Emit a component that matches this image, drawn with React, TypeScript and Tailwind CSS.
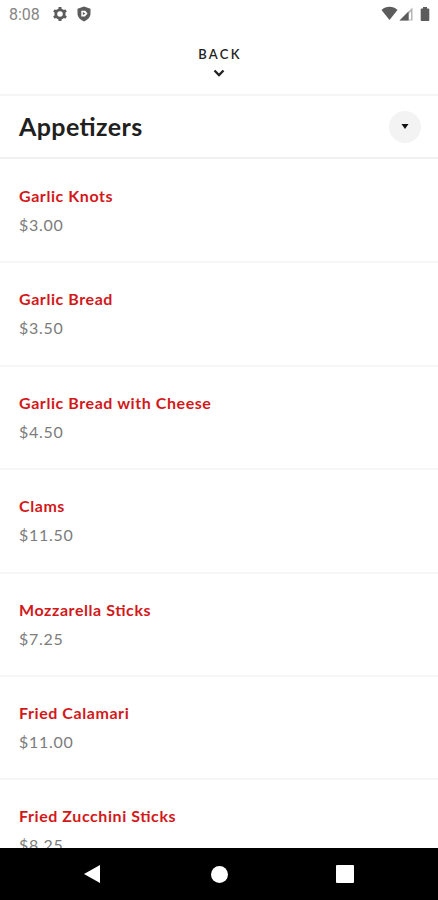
type MenuItem = { name: string; price: string };

const items: MenuItem[] = [
  { name: "Garlic Knots", price: "$3.00" },
  { name: "Garlic Bread", price: "$3.50" },
  { name: "Garlic Bread with Cheese", price: "$4.50" },
  { name: "Clams", price: "$11.50" },
  { name: "Mozzarella Sticks", price: "$7.25" },
  { name: "Fried Calamari", price: "$11.00" },
  { name: "Fried Zucchini Sticks", price: "$8.25" },
];

export default function App() {
  return (
    <div className="flex h-[900px] w-[438px] flex-col overflow-hidden bg-white font-['Lato',sans-serif]">
      <StatusBar />
      <BackButton />
      <CategoryHeader title="Appetizers" />
      <main className="min-h-0 flex-1 overflow-hidden">
        {items.map((item) => (
          <MenuRow key={item.name} item={item} />
        ))}
      </main>
      <NavigationBar />
    </div>
  );
}

function StatusBar() {
  return (
    <div className="flex h-7 shrink-0 items-center pl-[9px] pr-[8px] text-[#5c5c5c]">
      <span className="w-[43px] pt-px font-['Roboto',sans-serif] text-[16px] text-[#858585]">8:08</span>
      <svg className="size-4" viewBox="0 0 16 16" fill="none">
        <circle cx="8" cy="8" r="4.200" stroke="currentColor" strokeWidth="2.800" />
        <path
          d="M8 1v2.500M8 12.500V15M1.900 4.500l2.200 1.250M11.900 10.250l2.200 1.250M1.900 11.500l2.200-1.250M11.900 5.750l2.200-1.250"
          stroke="currentColor"
          strokeWidth="3"
        />
      </svg>
      <svg className="ml-[8px] size-4" viewBox="0 0 16 16">
        <path d="M8 .5l6.500 2.300v4.800c0 3.500-2.900 6.500-6.500 7.900-3.600-1.400-6.500-4.400-6.500-7.900V2.800z" fill="currentColor" />
        <path d="M5.300 4.700h4L11.500 7.500 9 10.500H5.300z" fill="white" />
        <path d="M6.800 6L9.500 7.500 6.800 9z" fill="currentColor" />
      </svg>
      <div className="ml-auto flex items-center">
        <svg className="h-4 w-[17px]" viewBox="0 0 17 16" fill="currentColor">
          <path d="M.5 4C5-.2 12-.2 16.500 4L8.500 14z" />
        </svg>
        <svg className="ml-px h-4 w-[15px]" viewBox="0 0 15 16">
          <path d="M.5 14.500L13.500 1.500v13z" fill="#b5b5b5" />
          <path d="M.5 14.500L9.500 5.500v9z" fill="currentColor" />
          <path d="M10 7.500l2-2v8h-2z" fill="white" />
        </svg>
        <svg className="ml-[6px] h-4 w-[10px]" viewBox="0 0 10 16" fill="currentColor">
          <path d="M3 1h4v1.500h1.500l.8.500v11.500l-.8.500h-7l-.8-.5V3l.8-.5H3z" />
        </svg>
      </div>
    </div>
  );
}

function BackButton() {
  return (
    <button className="flex h-[68px] shrink-0 flex-col items-center border-b-2 border-[#f5f5f5] pt-[17px] text-[#222]">
      <span className="pl-[2px] text-[13px] leading-[18px] font-semibold tracking-[2.300px]">BACK</span>
      <svg className="mt-[6px] h-[8px] w-[12px]" viewBox="0 0 12 8" fill="none">
        <path d="M1.500 1.500L6 6l4.500-4.500" stroke="currentColor" strokeWidth="2.300" />
      </svg>
    </button>
  );
}

function CategoryHeader({ title }: { title: string }) {
  return (
    <header className="flex h-[63px] shrink-0 items-center justify-between border-b-2 border-[#f0f0f0] pl-[19px] pr-[17px]">
      <h1 className="text-[25px] font-bold tracking-[0.400px] text-[#202020] [font-feature-settings:'liga'_1]">{title}</h1>
      <button className="flex size-8 items-center justify-center rounded-full bg-[#f3f3f3]">
        <svg className="h-[5px] w-[8px]" viewBox="0 0 8 5" fill="#111">
          <path d="M.5 0h7L4 5z" />
        </svg>
      </button>
    </header>
  );
}

function MenuRow({ item }: { item: MenuItem }) {
  return (
    <article className="h-[103.400px] pt-[25px] pl-[19px] shadow-[inset_0_-1px_0_#f5f5f5,0_1px_0_#f7f7f7]">
      <h2 className="text-[16px] leading-6 font-bold tracking-[0.570px] text-[#d3181a] [font-feature-settings:'liga'_1]">
        {item.name}
      </h2>
      <p className="mt-[5px] text-[16px] leading-6 tracking-[0.700px] text-[#7c7c7c]">{item.price}</p>
    </article>
  );
}

function NavigationBar() {
  return (
    <nav className="flex h-[52px] shrink-0 items-center bg-black pl-[83px] text-white">
      <svg className="h-[20px] w-[18px]" viewBox="0 0 18 20" fill="currentColor">
        <path d="M17 1v18L1 10z" />
      </svg>
      <div className="ml-[110px] size-[17px] rounded-full bg-white" />
      <div className="ml-[108px] size-[18px] rounded-[1px] bg-white" />
    </nav>
  );
}
